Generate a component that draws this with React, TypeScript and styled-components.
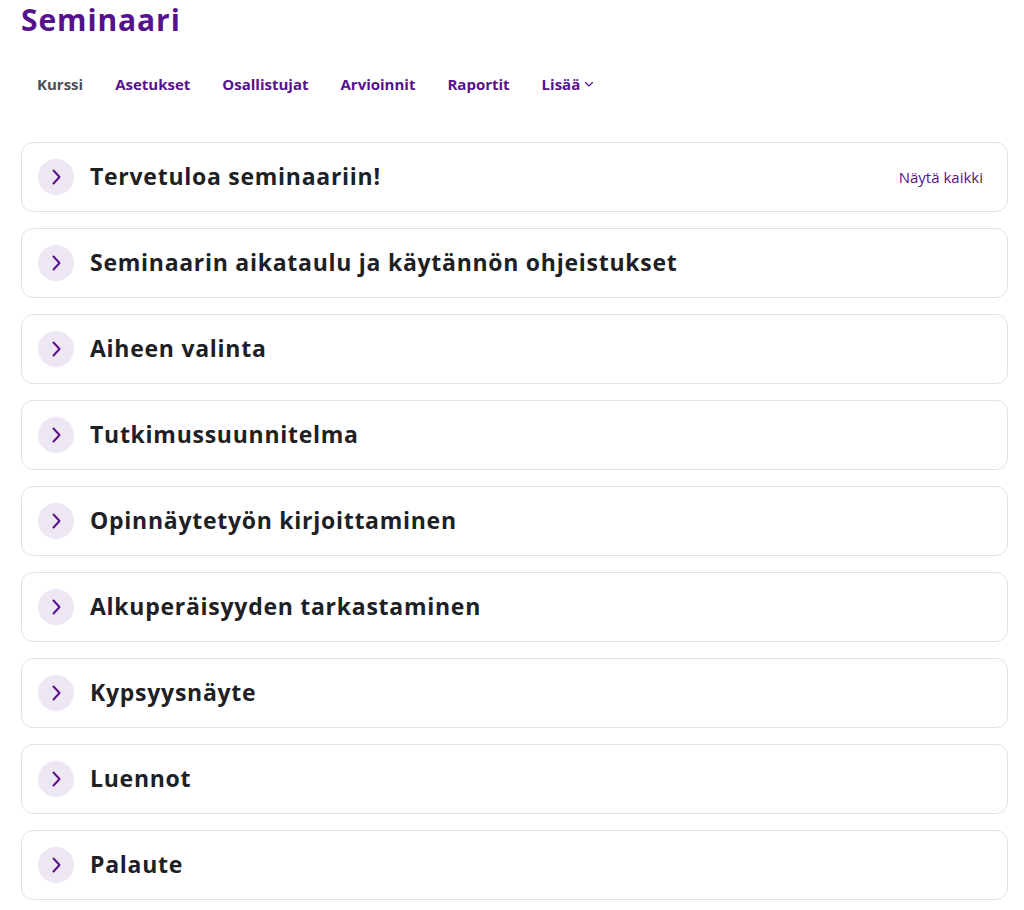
import React from 'react'
import styled, { createGlobalStyle } from 'styled-components'

const GlobalStyle = createGlobalStyle`
    body {
        margin: 0;
        background: #fff;
        font-family: "Open Sans", "Noto Sans", sans-serif;
        color: #1d2125;
    }
`

const sections = [
    'Tervetuloa seminaariin!',
    'Seminaarin aikataulu ja käytännön ohjeistukset',
    'Aiheen valinta',
    'Tutkimussuunnitelma',
    'Opinnäytetyön kirjoittaminen',
    'Alkuperäisyyden tarkastaminen',
    'Kypsyysnäyte',
    'Luennot',
    'Palaute',
]

const navItems = ['Kurssi', 'Asetukset', 'Osallistujat', 'Arvioinnit', 'Raportit']

const Chevron: React.FC = () => (
    <svg width="16" height="16" viewBox="0 0 16 16" fill="none">
        <path d="M5.5 1.5 L11.5 8 L5.5 14.5" stroke="#5b1189" strokeWidth="2" strokeLinecap="round" strokeLinejoin="round" />
    </svg>
)

const SmallChevron: React.FC = () => (
    <svg width="10" height="10" viewBox="0 0 10 10" fill="none">
        <path d="M1.5 3.5 L5 7 L8.5 3.5" stroke="#5b1189" strokeWidth="1.1" strokeLinecap="round" strokeLinejoin="round" />
    </svg>
)

const App: React.FC = () => {
    return (
        <Page>
            <GlobalStyle />
            <Title>Seminaari</Title>
            <Nav>
                {navItems.map((item, i) => (
                    <NavLink key={item} active={i === 0}>{item}</NavLink>
                ))}
                <NavLink active={false}>Lisää<SmallChevron /></NavLink>
            </Nav>
            <List>
                {sections.map((s, i) => (
                    <Card key={s}>
                        <Toggle><Chevron /></Toggle>
                        <SectionTitle>{s}</SectionTitle>
                        {i === 0 && <ShowAll>Näytä kaikki</ShowAll>}
                    </Card>
                ))}
            </List>
        </Page>
    )
}

export default App

const Page = styled.div`
    padding: 0 16px 0 21px;
`

const Title = styled.h1`
    margin: 0;
    padding-top: 1px;
    font-size: 30px;
    line-height: 38px;
    font-weight: 700;
    letter-spacing: 0.9px;
    color: #56118c;
`

const Nav = styled.nav`
    display: flex;
    align-items: center;
    margin-top: 26px;
    height: 38px;
`

const NavLink = styled.a<{ active: boolean }>`
    display: flex;
    align-items: center;
    gap: 4px;
    padding: 0 16px;
    font-size: 15px;
    font-weight: 700;
    color: ${p => (p.active ? '#495057' : '#56118c')};
    cursor: pointer;
`

const List = styled.div`
    display: flex;
    flex-direction: column;
    gap: 16px;
    margin-top: 39px;
`

const Card = styled.div`
    display: flex;
    align-items: center;
    height: 70px;
    box-sizing: border-box;
    padding: 0 24px 0 16px;
    border: 1px solid #dee2e6;
    border-radius: 12px;
    background: #fff;
`

const Toggle = styled.div`
    display: flex;
    align-items: center;
    justify-content: center;
    width: 36px;
    height: 36px;
    border-radius: 50%;
    background: #ede6f3;
    flex-shrink: 0;
`

const SectionTitle = styled.h3`
    margin: 0 0 0 16px;
    padding-bottom: 2px;
    font-size: 23px;
    line-height: 30px;
    font-weight: 700;
    letter-spacing: 0.73px;
    color: #1d2125;
    flex: 1;
`

const ShowAll = styled.a`
    font-size: 15px;
    color: #56118c;
    cursor: pointer;
`
